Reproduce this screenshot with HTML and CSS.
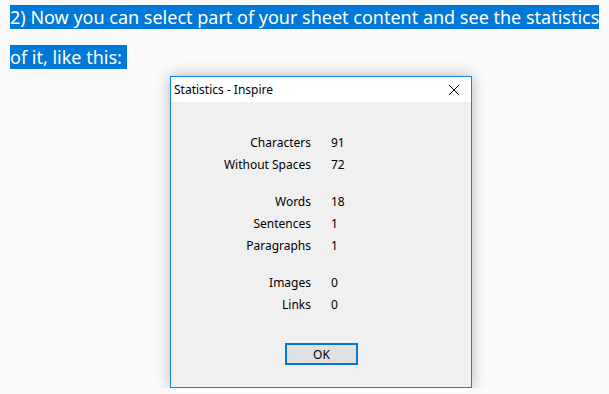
FILE: index.html
```html
<!DOCTYPE html>
<html lang="en">
<head>
    <meta charset="UTF-8">
    <title>Statistics - Inspire</title>
    <link rel="stylesheet" href="styles.css">
</head>
<body>
    <p class="intro"><span class="selected">2) Now you can select part of your sheet content and see the statistics<br>of it, like this:&nbsp;</span></p>

    <div class="dialog">
        <div class="titlebar">
            <span class="title">Statistics - Inspire</span>
            <svg class="close" width="10" height="10" viewBox="0 0 10 10">
                <path d="M0 0 L10 10 M10 0 L0 10" stroke="#000" stroke-width="1"/>
            </svg>
        </div>
        <div class="dialog-body">
            <div class="stats">
                <span class="label">Characters</span><span class="value">91</span>
                <span class="label">Without Spaces</span><span class="value">72</span>
            </div>
            <div class="stats">
                <span class="label">Words</span><span class="value">18</span>
                <span class="label">Sentences</span><span class="value">1</span>
                <span class="label">Paragraphs</span><span class="value">1</span>
            </div>
            <div class="stats">
                <span class="label">Images</span><span class="value">0</span>
                <span class="label">Links</span><span class="value">0</span>
            </div>
            <div class="actions">
                <button class="ok">OK</button>
            </div>
        </div>
    </div>
</body>
</html>
```

FILE: styles.css
```css
body, html {
    margin: 0;
    padding: 0;
    background-color: #fafafa;
    font-family: "Noto Sans", "Open Sans", sans-serif;
}

body {
    padding-left: 10px;
}

.intro {
    margin: 0;
    margin-top: -3px;
    font-size: 18px;
    line-height: 40px;
}

.selected {
    background-color: #0078d7;
    color: white;
}

.dialog {
    width: 300px;
    margin-left: 160px;
    margin-top: -1px;
    border: 1px solid #1883d7;
    background-color: #f0f0f0;
    box-shadow: 0 0 14px rgba(0, 0, 0, 0.28);
    font-size: 12px;
    color: #000;
}

.titlebar {
    display: flex;
    align-items: center;
    justify-content: space-between;
    height: 25px;
    padding: 0 12px 0 3px;
    background-color: white;
}

.dialog-body {
    padding: 29px 0 22px 0;
}

.stats {
    display: grid;
    grid-template-columns: 140px auto;
    column-gap: 20px;
    grid-auto-rows: 22px;
    align-items: center;
    margin-bottom: 15px;
}

.stats:last-of-type {
    margin-bottom: 0;
}

.label {
    text-align: right;
}

.actions {
    display: flex;
    justify-content: center;
    margin-top: 28px;
}

.ok {
    width: 73px;
    height: 22px;
    margin-left: 1px;
    border: 2px solid #0078d7;
    background-color: #e1e1e1;
    font-family: inherit;
    font-size: 12px;
    color: #000;
    padding: 0;
}
```
